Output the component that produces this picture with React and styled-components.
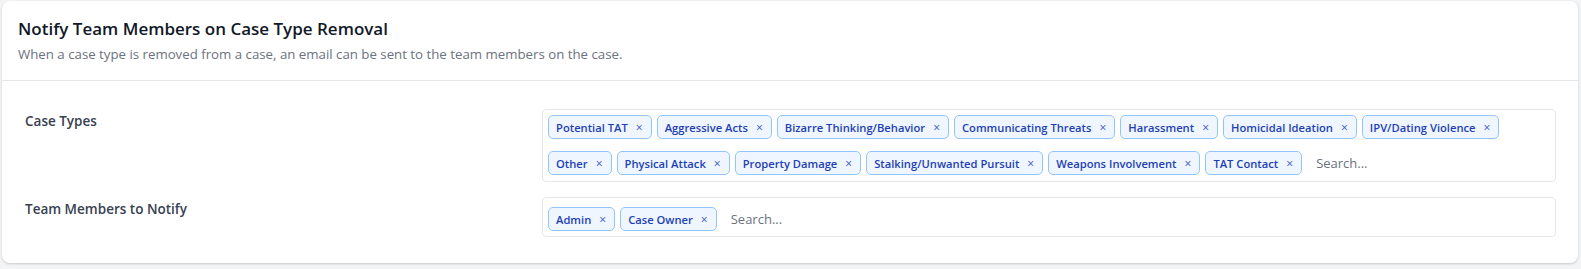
import React from "react";
import styled, { createGlobalStyle } from "styled-components";

const GlobalStyle = createGlobalStyle`
  body {
    margin: 0;
    padding: 1px 3px 4px 2px;
    background: #f3f4f6;
    font-family: "Open Sans", "Noto Sans", sans-serif;
  }
`;

const Card = styled.div`
  background: #fff;
  border-radius: 8px;
  box-shadow: 0 1px 3px rgba(0, 0, 0, 0.12), 0 1px 2px rgba(0, 0, 0, 0.06);
  overflow: hidden;
`;

const Header = styled.div`
  padding: 16px 16px 17px 16px;
  border-bottom: 1px solid #e5e7eb;
`;

const Title = styled.h2`
  margin: 0;
  font-size: 17px;
  font-weight: 600;
  color: #111827;
  line-height: 24px;
`;

const Subtitle = styled.p`
  margin: 4px 0 0;
  font-size: 13.25px;
  color: #6b7280;
  line-height: 18px;
`;

const Body = styled.div`
  padding: 28px 22px 26px 23px;
  display: flex;
  flex-direction: column;
  gap: 15px;
`;

const Row = styled.div`
  display: grid;
  grid-template-columns: 517px 1fr;
  align-items: start;
`;

const Label = styled.div`
  font-size: 13.5px;
  font-weight: 600;
  color: #374151;
  padding-top: ${p => p.$top}px;
`;

const Box = styled.div`
  border: 1px solid #e5e7eb;
  border-radius: 4px;
  padding: ${p => p.$pad};
  display: flex;
  flex-wrap: wrap;
  align-items: center;
  column-gap: 5px;
  row-gap: 12px;
`;

const Tag = styled.span`
  display: inline-flex;
  align-items: center;
  height: 24px;
  box-sizing: border-box;
  padding: 0 8px 0 7px;
  background: #eff6ff;
  border: 1px solid #93c5fd;
  border-radius: 5px;
  color: #1e3fb3;
  font-size: 11.2px;
  font-weight: 600;
`;

const Remove = styled.span`
  margin-left: 8px;
  font-size: 12px;
  font-weight: 400;
  color: #3b55c9;
`;

const Search = styled.input`
  border: none;
  outline: none;
  flex: 1;
  min-width: 120px;
  height: 24px;
  padding: 0 9px;
  font-family: inherit;
  font-size: 13px;
  color: #374151;
  background: transparent;
  &::placeholder {
    color: #6b7280;
  }
`;

const caseTypes = [
  "Potential TAT",
  "Aggressive Acts",
  "Bizarre Thinking/Behavior",
  "Communicating Threats",
  "Harassment",
  "Homicidal Ideation",
  "IPV/Dating Violence",
  "Other",
  "Physical Attack",
  "Property Damage",
  "Stalking/Unwanted Pursuit",
  "Weapons Involvement",
  "TAT Contact",
];

const members = ["Admin", "Case Owner"];

const TagInput = ({ items, pad }) => (
  <Box $pad={pad}>
    {items.map(t => (
      <Tag key={t}>
        {t}
        <Remove>×</Remove>
      </Tag>
    ))}
    <Search placeholder="Search..." />
  </Box>
);

export default function App() {
  return (
    <>
      <GlobalStyle />
      <Card>
        <Header>
          <Title>Notify Team Members on Case Type Removal</Title>
          <Subtitle>When a case type is removed from a case, an email can be sent to the team members on the case.</Subtitle>
        </Header>
        <Body>
          <Row>
            <Label $top={3}>Case Types</Label>
            <TagInput items={caseTypes} pad="5px 5px 6px" />
          </Row>
          <Row>
            <Label $top={3}>Team Members to Notify</Label>
            <TagInput items={members} pad="9px 5px 5px" />
          </Row>
        </Body>
      </Card>
    </>
  );
}
